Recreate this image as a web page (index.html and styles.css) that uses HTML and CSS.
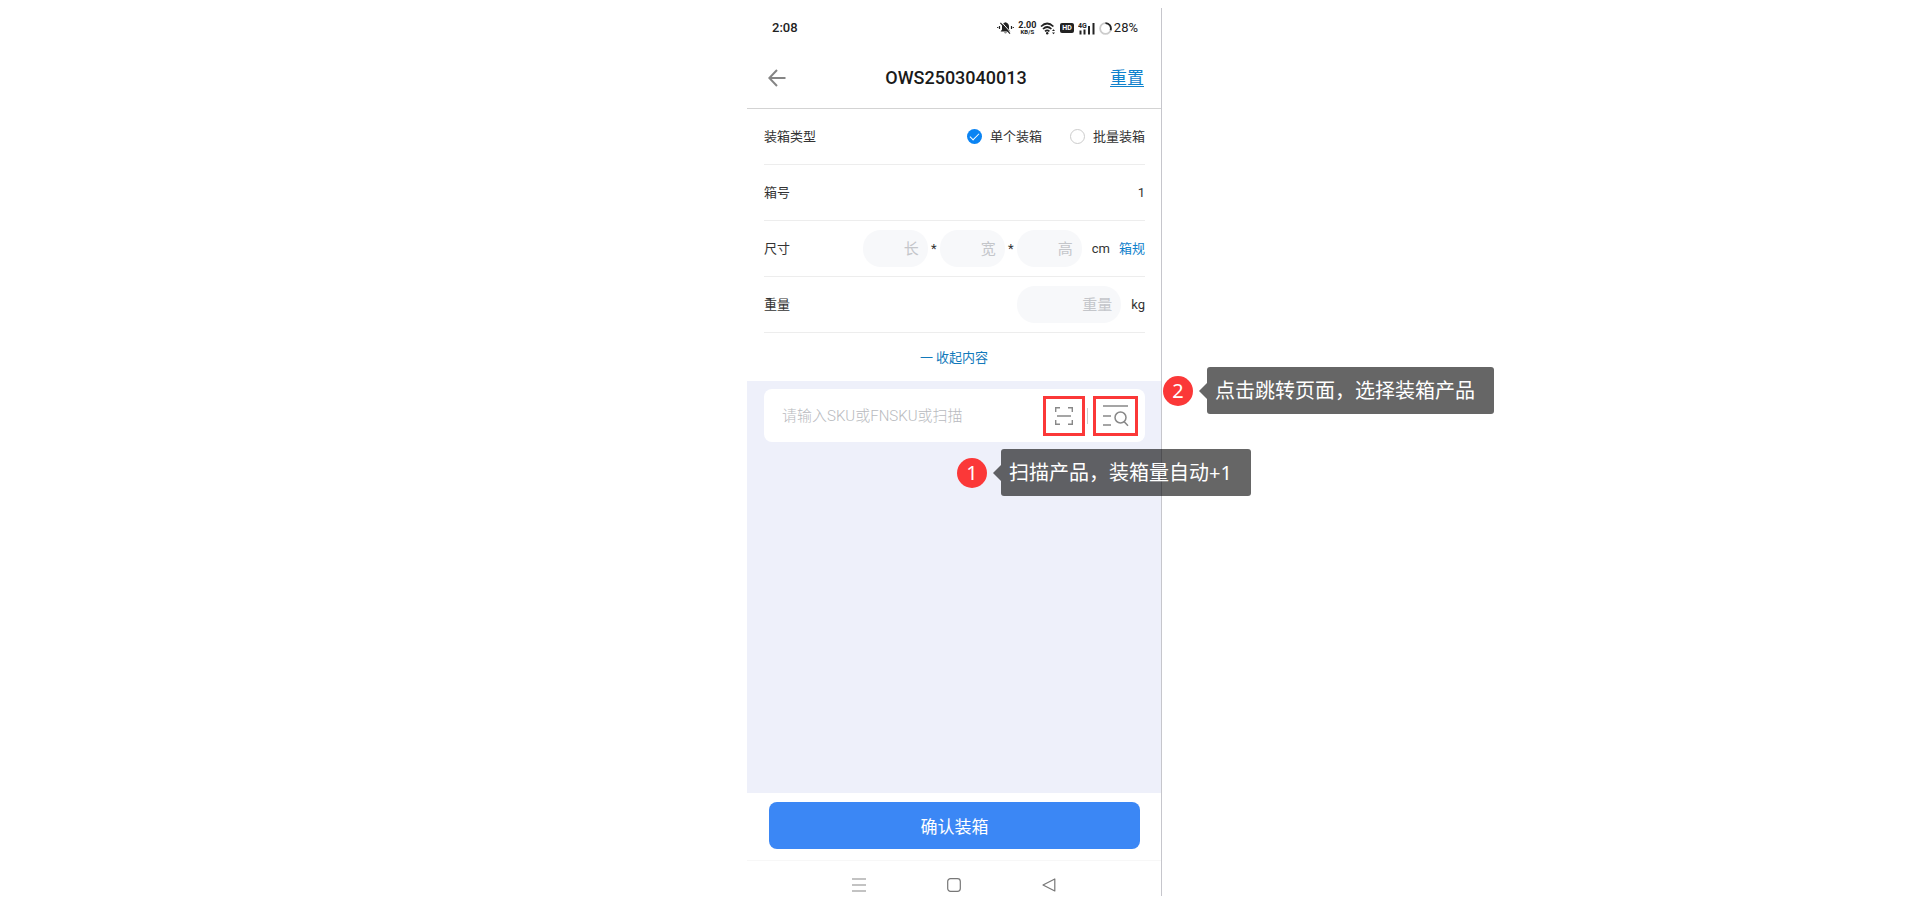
FILE: index.html
```html
<!DOCTYPE html>
<html lang="zh-CN">
<head>
  <meta charset="UTF-8">
  <meta name="viewport" content="width=device-width, initial-scale=1.0">
  <title>OWS2503040013</title>
  <link rel="stylesheet" href="styles.css">
</head>
<body>
  <div class="phone">
    <div class="status-bar">
      <span class="time">2:08</span>
      <div class="status-icons">
        <svg width="17" height="14" viewBox="0 0 17 14">
          <path d="M8.5 1.2C5.9 1.8 5 3.6 5 5.6V8.400L3.600 10.400H13.400L12 8.400V5.600C12 3.600 11.100 1.800 8.500 1.200ZM7 11.400H10C9.800 12.500 7.200 12.500 7 11.400Z" fill="#222"/>
          <path d="M4.600 1.200L14 11.800" stroke="#fff" stroke-width="1"/>
          <path d="M3.400 1.800L13 12.600M2.500 5V8M.7 6V7M14.500 5V8M16.300 6V7" stroke="#222" stroke-width="1.200"/>
        </svg>
        <span class="speed"><b>2.00</b><small>KB/S</small></span>
        <svg width="16" height="13" viewBox="0 0 16 13">
          <path d="M1 4.500Q7.200-1.500 13.400 4.500M3 7Q7.200 3 11.400 7M5 9.300Q7.200 7.300 9.400 9.300" fill="none" stroke="#222" stroke-width="1.700"/>
          <circle cx="7.200" cy="11.200" r="1.200" fill="#222"/>
          <path d="M12 9L13.500 7.300L15 9ZM12 10.400L13.500 12.200L15 10.400Z" fill="#222"/>
        </svg>
        <span class="hd">HD</span>
        <svg class="signal" width="17" height="13" viewBox="0 0 17 13">
          <text x="0" y="6">4G</text>
          <path d="M2.500 8.500V12.500M6.500 7.500V12.500M11 4V12.500M15.500 1V12.500" stroke="#222" stroke-width="2"/>
        </svg>
        <svg class="ring" width="13" height="13" viewBox="0 0 13 13" fill="none" stroke-width="1.800">
          <circle cx="6.500" cy="6.500" r="5.400" stroke="#ccc"/>
          <path d="M6.500 1.100A5.400 5.400 0 0 1 11.600 8.200" stroke="#222"/>
        </svg>
        <span class="battery">28%</span>
      </div>
    </div>

    <header class="header">
      <button type="button" class="icon-button" aria-label="返回">
        <svg width="18" height="18" viewBox="0 0 18 18" fill="none" stroke="#858585" stroke-width="2">
          <path d="M17.500 9H1.500M9 1L1.300 9L9 17"/>
        </svg>
      </button>
      <h1>OWS2503040013</h1>
      <a href="#" class="reset">重置</a>
    </header>

    <form class="form">
      <div class="row">
        <span>装箱类型</span>
        <div class="radios">
          <label><input type="radio" name="type" checked>单个装箱</label>
          <label><input type="radio" name="type">批量装箱</label>
        </div>
      </div>
      <div class="row">
        <span>箱号</span>
        <span>1</span>
      </div>
      <div class="row">
        <span>尺寸</span>
        <div class="fields">
          <input type="text" placeholder="长" aria-label="长">
          <span class="times">*</span>
          <input type="text" placeholder="宽" aria-label="宽">
          <span class="times">*</span>
          <input type="text" placeholder="高" aria-label="高">
          <span class="unit">cm</span>
          <a href="#" class="spec">箱规</a>
        </div>
      </div>
      <div class="row">
        <label for="weight">重量</label>
        <div class="fields">
          <input type="text" id="weight" class="weight" placeholder="重量">
          <span class="unit">kg</span>
        </div>
      </div>
      <button type="button" class="collapse">一 收起内容</button>
    </form>

    <main class="content">
      <div class="search">
        <input type="text" placeholder="请输入SKU或FNSKU或扫描" aria-label="SKU">
        <button type="button" class="marked scan" aria-label="扫描">
          <svg width="18" height="18" viewBox="0 0 18 18" fill="none" stroke="#888" stroke-width="1.400">
            <path d="M.7 5V.7H5M13 .7H17.300V5M.7 13V17.300H5M13 17.300H17.300V13M2 9H16"/>
          </svg>
        </button>
        <span class="divider"></span>
        <button type="button" class="marked pick" aria-label="选择产品">
          <svg width="26" height="22" viewBox="0 0 26 22" fill="none" stroke="#888" stroke-width="1.500">
            <path d="M0 1H25M0 11H8M0 20H8M21.200 16.700L25 20.800"/>
            <circle cx="17.500" cy="12.500" r="5.500"/>
          </svg>
        </button>

        <div class="note note-scan">
          <span class="badge">1</span>
          <span class="tip">扫描产品，装箱量自动+1</span>
        </div>
        <div class="note note-pick">
          <span class="badge">2</span>
          <span class="tip">点击跳转页面，选择装箱产品</span>
        </div>
      </div>
    </main>

    <div class="footer">
      <button type="button" class="confirm">确认装箱</button>
    </div>

    <nav class="system-nav">
      <svg width="14" height="14" viewBox="0 0 14 14" stroke="#888" stroke-width="1.200">
        <path d="M0 1H14M0 7H14M0 13H14"/>
      </svg>
      <svg width="14" height="14" viewBox="0 0 14 14" fill="none" stroke="#777" stroke-width="1.200">
        <rect x=".7" y=".7" width="12.600" height="12.600" rx="2.800"/>
      </svg>
      <svg width="14" height="14" viewBox="0 0 14 14" fill="none" stroke="#777" stroke-width="1.200" stroke-linejoin="round">
        <path d="M12.800 1V13L1 7Z"/>
      </svg>
    </nav>
  </div>
</body>
</html>
```
FILE: styles.css
```css
* {
  box-sizing: border-box;
}
body {
  margin: 0;
  padding: 8px 1px 8px 0;
  background-color: #fff;
  color: #333;
  font-family: Roboto, "Noto Sans CJK SC", sans-serif;
  font-size: 13px;
  line-height: 20px;
}
button, input {
  font-family: inherit;
  font-size: inherit;
  color: inherit;
  border: none;
  padding: 0;
  margin: 0;
}
button {
  background: none;
  cursor: pointer;
}
a {
  color: #0f81cc;
}
svg {
  display: block;
  flex-shrink: 0;
}
.phone {
  display: flex;
  flex-direction: column;
  max-width: 415px;
  min-height: calc(100vh - 16px);
  margin: 0 auto;
  border-right: 1px solid #c6c6cc;
}

/* status bar */
.status-bar {
  display: flex;
  align-items: center;
  justify-content: space-between;
  height: 40px;
  padding: 0 23px 0 25px;
  color: #222;
}
.time {
  font-weight: 500;
}
.status-icons {
  display: flex;
  align-items: center;
  gap: 4px;
}
.speed {
  display: flex;
  flex-direction: column;
  align-items: center;
}
.speed b {
  font-size: 9px;
  line-height: 8px;
}
.speed small {
  font-size: 6px;
  font-weight: 700;
  line-height: 6px;
}
.hd {
  padding: 0 2px;
  border-radius: 2px;
  background-color: #222;
  color: #fff;
  font-size: 7px;
  font-weight: 700;
  line-height: 10px;
}
.signal text {
  font-size: 7px;
  font-weight: 700;
  fill: #222;
}
.battery {
  margin-left: -2px;
}

/* header */
.header {
  display: flex;
  align-items: center;
  justify-content: space-between;
  height: 61px;
  padding: 0 17px 0 21px;
  border-bottom: 1px solid #d3d3d3;
}
.header h1 {
  margin: 0;
  color: #1a1a1a;
  font-size: 18px;
  font-weight: 500;
}
.icon-button, .reset {
  flex: 1;
}
.reset {
  font-size: 17px;
  text-align: right;
  text-underline-offset: 2px;
}

/* form */
.form {
  display: flex;
  flex-direction: column;
}
.row {
  display: flex;
  align-items: center;
  justify-content: space-between;
  height: 56px;
  margin: 0 16px 0 17px;
  border-bottom: 1px solid #ededed;
}
.radios {
  display: flex;
  gap: 28px;
}
.radios label {
  display: flex;
  align-items: center;
  gap: 8px;
}
.radios input {
  appearance: none;
  width: 15px;
  height: 15px;
  border: 1px solid #ccc;
  border-radius: 50%;
}
.radios input:checked {
  display: flex;
  justify-content: center;
  border: none;
  background-color: #0b84f3;
}
.radios input:checked::before {
  content: "";
  width: 8px;
  height: 4px;
  margin-top: 4px;
  border-left: 1px solid #fff;
  border-bottom: 1px solid #fff;
  transform: rotate(-45deg);
}
.fields {
  display: flex;
  align-items: center;
}
.fields input {
  width: 65px;
  height: 37px;
  padding: 0 9px;
  border-radius: 18px;
  background-color: #f7f8fa;
  font-size: 15px;
  text-align: right;
}
.fields .weight {
  width: 104px;
}
.times {
  width: 12px;
  text-align: center;
}
.unit {
  margin-left: 10px;
}
.spec {
  margin-left: 9px;
  text-decoration: none;
}
input::placeholder {
  color: #c4c6ca;
  opacity: 1;
}
.collapse {
  height: 48px;
  padding-bottom: 2px;
  color: #1279bb;
}

/* content */
.content {
  flex: 1;
  padding: 8px 16px 8px 17px;
  background-color: #eef0fa;
}
.search {
  position: relative;
  display: flex;
  align-items: center;
  height: 53px;
  padding: 0 7px 0 18px;
  border-radius: 8px;
  background-color: #fff;
}
.search input {
  flex: 1;
  min-width: 0;
  background: none;
  font-size: 15px;
  font-weight: 300;
}
.search input::placeholder {
  color: #b8babe;
}
.marked {
  display: flex;
  align-items: center;
  justify-content: center;
  height: 40px;
  border: 3px solid #fb3838;
}
.scan {
  width: 42px;
}
.pick {
  width: 45px;
}
.divider {
  width: 1px;
  height: 16px;
  margin: 0 5px 0 2px;
  background-color: #ccc;
}

/* numbered notes lie over the page */
.note {
  position: absolute;
  display: flex;
  align-items: center;
  gap: 14px;
  color: #fff;
  font-family: "Noto Sans", "Noto Sans CJK SC", sans-serif;
  font-size: 20px;
  white-space: nowrap;
}
.note-scan {
  top: 60px;
  left: 193px;
}
.note-pick {
  top: -22px;
  left: 399px;
}
.badge {
  width: 30px;
  border-radius: 50%;
  background-color: #fb3838;
  line-height: 30px;
  text-align: center;
}
.tip {
  position: relative;
  padding: 0 19px 0 8px;
  border-radius: 3px;
  background-color: rgba(0, 0, 0, 0.6);
  line-height: 47px;
}
.tip::before {
  content: "";
  position: absolute;
  top: 16px;
  right: 100%;
  border: 8px solid transparent;
  border-left: none;
  border-right-color: rgba(0, 0, 0, 0.6);
}

/* bottom */
.footer {
  padding: 9px 21px 11px 22px;
}
.confirm {
  width: 100%;
  height: 47px;
  border-radius: 8px;
  background-color: #3b87f5;
  color: #fff;
  font-size: 17px;
}
.system-nav {
  display: flex;
  justify-content: center;
  gap: 81px;
  height: 36px;
  padding-top: 17px;
  border-top: 1px solid #f7f7f7;
}
```
